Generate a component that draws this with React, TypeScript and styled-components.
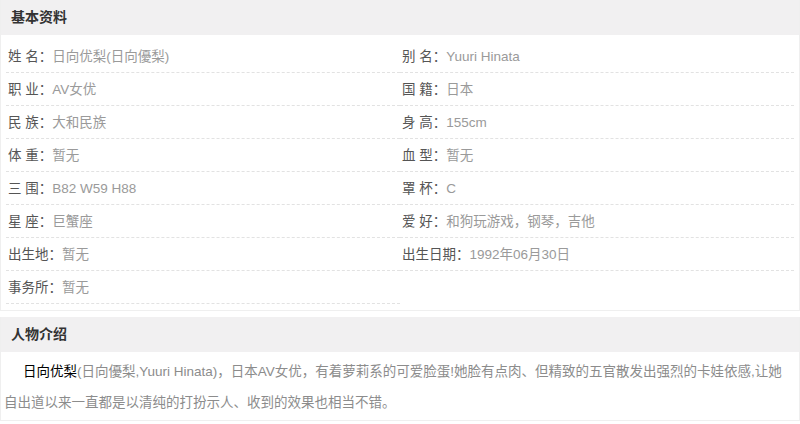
import styled, { createGlobalStyle } from "styled-components";

const GlobalStyle = createGlobalStyle`
  html, body {
    margin: 0;
    padding: 0;
    background: #fff;
  }
  body {
    font-family: "Liberation Sans", "Noto Sans CJK SC", sans-serif;
  }
`;

const info = [
    { label: "姓 名", value: "日向优梨(日向優梨)" },
    { label: "别 名", value: "Yuuri Hinata" },
    { label: "职 业", value: "AV女优" },
    { label: "国 籍", value: "日本" },
    { label: "民 族", value: "大和民族" },
    { label: "身 高", value: "155cm" },
    { label: "体 重", value: "暂无" },
    { label: "血 型", value: "暂无" },
    { label: "三 围", value: "B82 W59 H88" },
    { label: "罩 杯", value: "C" },
    { label: "星 座", value: "巨蟹座" },
    { label: "爱 好", value: "和狗玩游戏，钢琴，吉他" },
    { label: "出生地", value: "暂无" },
    { label: "出生日期", value: "1992年06月30日" },
    { label: "事务所", value: "暂无" },
];

export default function App() {
    return (
        <Page>
            <GlobalStyle />
            <Box>
                <Title>基本资料</Title>
                <InfoList>
                    {info.map((item) => (
                        <InfoItem key={item.label}>
                            <Label>{item.label}：</Label>
                            <Value>{item.value}</Value>
                        </InfoItem>
                    ))}
                </InfoList>
            </Box>
            <Box $gap>
                <Title>人物介绍</Title>
                <Intro>
                    <Name>日向优梨</Name>(日向優梨,Yuuri Hinata)，日本AV女优，有着萝莉系的可爱脸蛋!她脸有点肉、但精致的五官散发出强烈的卡娃依感,让她自出道以来一直都是以清纯的打扮示人、收到的效果也相当不错。
                </Intro>
            </Box>
        </Page>
    );
}

const Page = styled.div`
  width: 800px;
`;

const Box = styled.section<{ $gap?: boolean }>`
  border: 1px solid #efefef;
  border-top: none;
  margin-top: ${(p) => (p.$gap ? "6px" : "0")};
`;

const Title = styled.h2`
  margin: 0;
  height: 35px;
  line-height: 35px;
  padding-left: 10px;
  background: #f1f0f1;
  font-size: 14px;
  font-weight: bold;
  color: #333;
`;

const InfoList = styled.ul`
  list-style: none;
  margin: 0;
  padding: 5px 5px 6px;
  display: grid;
  grid-template-columns: 1fr 1fr;
`;

const InfoItem = styled.li`
  height: 32px;
  line-height: 33px;
  padding-left: 2px;
  border-bottom: 1px dashed #e2e2e2;
  font-size: 13.5px;
  white-space: nowrap;
`;

const Label = styled.span`
  color: #555;
`;

const Value = styled.span`
  color: #9a9a9a;
`;

const Intro = styled.p`
  margin: 0;
  padding: 4px 6px 2px 3px;
  text-indent: 19px;
  line-height: 31px;
  font-size: 13.5px;
  color: #8c8c8c;
`;

const Name = styled.span`
  color: #000;
`;
